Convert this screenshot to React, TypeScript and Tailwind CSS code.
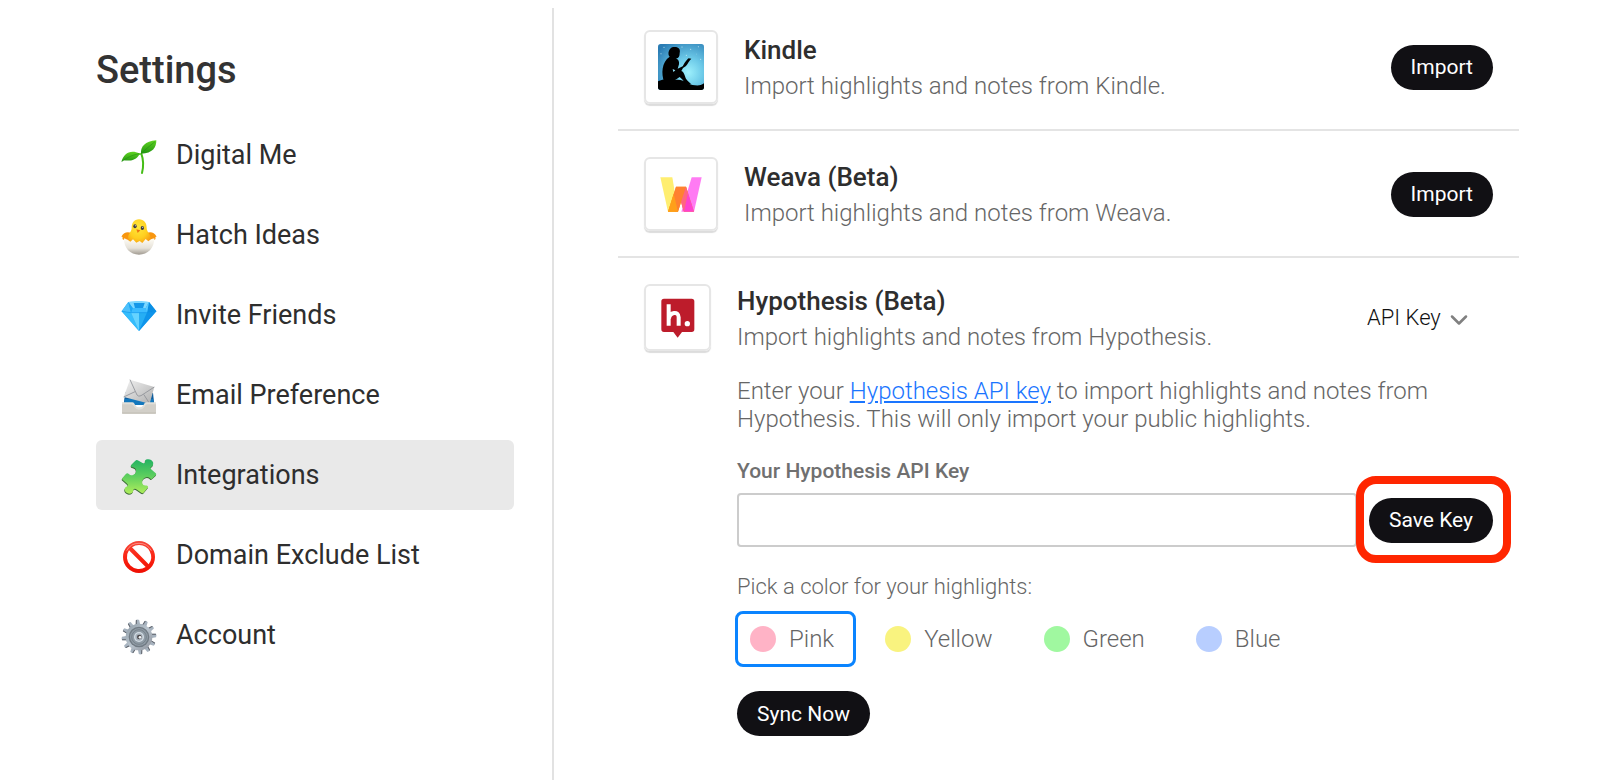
import React, { useState } from 'react';
import { ChevronDown } from 'lucide-react';

// Sidebar icons, all drawn on the same 108 grid
const SeedlingIcon = () => (
  <svg className="w-9 h-9" viewBox="0 0 108 108">
    <defs>
      <linearGradient id="leaf" x1="0" y1="0" x2="0" y2="1">
        <stop offset="0" stopColor="#5fd321" />
        <stop offset="1" stopColor="#219410" />
      </linearGradient>
    </defs>
    <path d="M61 44C66 58 69 78 63 102" fill="none" stroke="#45bd16" strokeWidth="6" strokeLinecap="round" />
    <path d="M59 46C52 42 46 46 40 44" fill="none" stroke="#45bd16" strokeWidth="4" />
    <path d="M60 44C58 24 72 6 106 4C106 24 96 44 60 44Z" fill="url(#leaf)" />
    <path d="M1 69C8 44 28 30 56 44C46 66 24 66 8 64Z" fill="url(#leaf)" />
    <path d="M62 42C74 30 88 20 102 8M4 67C16 56 34 48 54 44" fill="none" stroke="#1b8a10" strokeWidth="1.5" />
  </svg>
);

const ChickIcon = () => (
  <svg className="w-9 h-9" viewBox="0 0 108 108">
    <defs>
      <radialGradient id="chick" cx="0.45" cy="0.3" r="0.7">
        <stop offset="0" stopColor="#ffe83d" />
        <stop offset="0.6" stopColor="#ffce1f" />
        <stop offset="1" stopColor="#f79a10" />
      </radialGradient>
      <linearGradient id="shell" x1="0" y1="0" x2="0" y2="1">
        <stop offset="0" stopColor="#fffdf6" />
        <stop offset="0.6" stopColor="#e6e2d9" />
        <stop offset="1" stopColor="#a09a91" />
      </linearGradient>
    </defs>
    <path d="M32 42C20 38 8 39 2 52Q1 55 5 53Q3 62 8 62L13 59L18 68H90L95 59L100 62Q105 62 103 53Q107 55 106 52C100 39 88 38 76 42Z" fill="#f8960f" />
    <path d="M54 1C39 1 32 13 32 27C32 37 24 42 21 54L26 80H86L89 54C86 42 77 38 77 26C77 12 69 1 54 1Z" fill="url(#chick)" />
    <path d="M9 58L20 62L28 68L36 61L46 71L56 66L64 72L74 60L82 67L90 61L100 58C100 88 80 107 54 107S8 88 9 58Z" fill="url(#shell)" />
    <ellipse cx="42" cy="22" rx="5" ry="6" fill="#3b3a44" />
    <ellipse cx="64" cy="27" rx="5" ry="6" fill="#3b3a44" />
    <circle cx="43" cy="20" r="1.6" fill="#fff" />
    <circle cx="65" cy="25" r="1.6" fill="#fff" />
    <path d="M46 31L58 34L50 42Z" fill="#ee7410" />
  </svg>
);

const DiamondIcon = () => (
  <svg className="w-9 h-9" viewBox="0 0 108 108">
    <path d="M2 37L22 9H84L106 37L54 96Z" fill="#19a5f5" />
    <path d="M22 9L30 41L2 37Z" fill="#4cc0fb" />
    <path d="M84 9L78 41L106 37Z" fill="#0b8fe4" />
    <path d="M22 9C40 5 66 5 84 9L74 27H35Z" fill="#7ed8ff" />
    <path d="M38 12H71L66 28H42Z" fill="#1598e9" />
    <path d="M35 27H74L78 41H30Z" fill="#3cbcff" />
    <path d="M22 9L35 27L30 41Z" fill="#1fa9f5" />
    <path d="M84 9L74 27L78 41Z" fill="#5ccbff" />
    <path d="M2 37L30 41L54 96Z" fill="#35bdfc" />
    <path d="M30 41H54V96Z" fill="#65d3ff" />
    <path d="M54 41H78L54 96Z" fill="#26aef4" />
    <path d="M78 41L106 37L54 96Z" fill="#0f94ea" />
    <path d="M2 37L30 41H78L106 37" fill="none" stroke="#0a8fe6" strokeWidth="1.5" />
  </svg>
);

const InboxIcon = () => (
  <svg className="w-9 h-9" viewBox="0 0 108 108">
    <defs>
      <linearGradient id="paper" x1="0" y1="0" x2="1" y2="1">
        <stop offset="0" stopColor="#f3f3f3" />
        <stop offset="1" stopColor="#aeaeae" />
      </linearGradient>
    </defs>
    <path d="M10 60L14 40L96 42L100 78H8Z" fill="#0e5d9d" />
    <path d="M12 60H96L100 78H8Z" fill="#1478bd" />
    <path d="M27 2L100 24L86 74L8 54Z" fill="url(#paper)" />
    <path d="M27 2L48 48Q53 54 60 50L100 24M8 54L42 38M86 74L68 46" fill="none" stroke="#8e9096" strokeWidth="2.5" />
    <path d="M3 70H34Q39 70 42 77Q46 85 54 85Q64 85 68 77Q71 70 76 70H105V101Q105 104 102 104H6Q3 104 3 101Z" fill="#e1dfd9" />
    <path d="M3 76H32Q37 78 40 84Q45 92 54 92Q65 92 70 84Q73 76 78 76H105V101Q105 104 102 104H6Q3 104 3 101Z" fill="#d2cfc8" />
    <path d="M3 102H105" stroke="#b5b2ab" strokeWidth="2" />
  </svg>
);

const PuzzleIcon = () => {
  const shape =
    'M43 5Q46 2 50 4L65 12Q71 15 73 10Q70 2 80 1Q92 0 97 10Q99 20 92 24Q86 28 92 32L106 44Q108 47 105 50L94 60Q90 63 87 58Q80 52 72 57Q62 63 64 74Q66 82 75 81Q82 80 82 86L68 103Q65 106 61 103L48 94Q40 88 37 94Q36 106 24 106Q13 105 10 95Q9 87 17 84Q24 81 17 75L3 63Q0 60 4 57L14 46Q18 41 23 46Q29 52 37 48Q46 44 45 34Q44 26 36 25Q28 25 30 18Z';
  return (
    <svg className="w-9 h-9" viewBox="0 0 108 110">
      <defs>
        <linearGradient id="puzzle" x1="0" y1="0" x2="0" y2="1">
          <stop offset="0" stopColor="#22b262" />
          <stop offset="0.5" stopColor="#5fcf5e" />
          <stop offset="1" stopColor="#b0ee5c" />
        </linearGradient>
      </defs>
      <path d={shape} fill="#3c6b37" transform="translate(-1 3)" />
      <path d={shape} fill="url(#puzzle)" />
    </svg>
  );
};

const ProhibitedIcon = () => (
  <svg className="w-9 h-9" viewBox="0 0 108 108">
    <defs>
      <linearGradient id="stop" x1="0" y1="0" x2="0" y2="1">
        <stop offset="0" stopColor="#f5473a" />
        <stop offset="0.5" stopColor="#fb2412" />
        <stop offset="1" stopColor="#ee0e02" />
      </linearGradient>
    </defs>
    <path
      d="M54 6A48 48 0 1 0 54 102A48 48 0 1 0 54 6ZM54 18A36 36 0 0 1 83 76L33 25A36 36 0 0 1 54 18ZM24 34L74 84A36 36 0 0 1 24 34Z"
      fill="url(#stop)"
      fillRule="evenodd"
    />
    <path d="M17 35A42 42 0 0 1 91 35" fill="none" stroke="#ffb0a8" strokeWidth="2" />
  </svg>
);

const GearIcon = () => (
  <svg className="w-9 h-9" viewBox="0 0 108 108">
    <defs>
      <linearGradient id="gear" x1="0" y1="0" x2="1" y2="1">
        <stop offset="0" stopColor="#8e9ba6" />
        <stop offset="0.5" stopColor="#b9c4ce" />
        <stop offset="1" stopColor="#8b8f98" />
      </linearGradient>
    </defs>
    {Array.from({ length: 12 }, (_, i) => (
      <g key={i} transform={`rotate(${i * 30 - 5} 54 54)`}>
        <path d="M47 20L49 3Q54 0 59 3L61 20Z" fill="#a7b3bf" />
        <path d="M47 20L49 3L52 2L50 20Z" fill="#5c6068" />
      </g>
    ))}
    <circle cx="54" cy="54" r="40" fill="url(#gear)" />
    <circle cx="54" cy="54" r="31" fill="#717b84" />
    <circle cx="54" cy="54" r="27" fill="#8f9ba5" />
    <circle cx="54" cy="54" r="22" fill="none" stroke="#77828b" strokeWidth="3" />
    <circle cx="54" cy="54" r="15" fill="#d3dce4" />
    <circle cx="54" cy="54" r="11" fill="#a6b1bb" />
    <circle cx="55" cy="54" r="7" fill="#4d4a4c" />
    <circle cx="57" cy="55" r="4" fill="#f4f6f8" />
  </svg>
);

// Integration logos
const KindleLogo = () => (
  <svg className="w-[46px] h-[46px]" viewBox="0 0 138 138">
    <defs>
      <radialGradient id="sky" cx="0.66" cy="0.62" r="0.8">
        <stop offset="0" stopColor="#9df0fc" />
        <stop offset="0.4" stopColor="#6cc9e8" />
        <stop offset="1" stopColor="#2a7cb4" />
      </radialGradient>
      <clipPath id="tile">
        <rect width="138" height="138" rx="8" />
      </clipPath>
    </defs>
    <g clipPath="url(#tile)">
      <rect width="138" height="138" fill="url(#sky)" />
      <g fill="#d8f5fc">
        <circle cx="9" cy="29" r="1.5" />
        <circle cx="18" cy="10" r="1.5" />
        <circle cx="72" cy="9" r="1.5" />
        <circle cx="85" cy="34" r="1.5" />
        <circle cx="98" cy="16" r="1.5" />
        <circle cx="121" cy="8" r="1.5" />
        <circle cx="128" cy="46" r="1.5" />
        <circle cx="116" cy="30" r="1" />
      </g>
      <path d="M0 112C16 104 34 107 50 108C66 105 78 110 90 119C104 122 122 130 138 118V138H0Z" />
      <path d="M35 38C27 31 33 8 48 9C62 8 68 16 65 27C65 37 62 44 54 43C60 46 65 52 63 61L59 74L74 67L80 56C86 50 89 43 92 43L100 44C95 48 88 61 84 66L75 72L70 81C80 84 81 101 85 106C91 114 97 117 99 120L84 122C77 111 72 104 65 99L47 111L18 113C10 89 10 55 35 38Z" />
      <path d="M44 75L52 79L46 84Z" fill="#8edcf0" />
    </g>
  </svg>
);

const WeavaLogo = () => (
  <svg className="w-[42px] h-[35px]" viewBox="0 0 126 105">
    <path d="M1 1H37L54 104H24Z" fill="#ffee70" />
    <path d="M95 1H125L102 104H64Z" fill="#ff7bf3" />
    <path d="M48 29H78L102 104H72L63 76L54 104H24Z" fill="#ff9a24" />
    <path d="M48 29H78L84 50L63 76L54 104H44L38 62Z" fill="#ff8130" />
    <path d="M36 68L44 104H24Z" fill="#ffb01f" />
    <path d="M41 50L54 104H24Z" fill="#ff9f1a" />
    <path d="M83 44L102 104H72L66 84Z" fill="#ff41cf" />
    <path d="M78 29L84 47L72 104L63 76Z" fill="#ff6680" />
  </svg>
);

const HypothesisLogo = () => (
  <svg className="w-[34px] h-10" viewBox="0 0 102 120">
    <path d="M9 2H92Q100 2 100 10V94Q100 102 92 102H63L50 119L37 102H9Q1 102 1 94V10Q1 2 9 2Z" fill="#bd1c2b" />
    <path d="M23 19V83M24 62C26 42 53 38 53 58V83" fill="none" stroke="#fff" strokeWidth="12" />
    <circle cx="79" cy="77" r="8" fill="#fff" />
  </svg>
);

const navItems = [
  { label: 'Digital Me', Icon: SeedlingIcon },
  { label: 'Hatch Ideas', Icon: ChickIcon },
  { label: 'Invite Friends', Icon: DiamondIcon },
  { label: 'Email Preference', Icon: InboxIcon },
  { label: 'Integrations', Icon: PuzzleIcon },
  { label: 'Domain Exclude List', Icon: ProhibitedIcon },
  { label: 'Account', Icon: GearIcon },
];

const importers = [
  { name: 'Kindle', text: 'Import highlights and notes from Kindle.', Logo: KindleLogo },
  { name: 'Weava (Beta)', text: 'Import highlights and notes from Weava.', Logo: WeavaLogo },
];

const colors = [
  { name: 'Pink', dot: 'bg-[#ffb3c6]' },
  { name: 'Yellow', dot: 'bg-[#f9f37f]' },
  { name: 'Green', dot: 'bg-[#a0f8a0]' },
  { name: 'Blue', dot: 'bg-[#b8ceff]' },
];

const PillButton = ({ children }: { children: React.ReactNode }) => (
  <button type="button" className="h-[45px] px-5 rounded-full bg-[#111014] text-white text-[21px] leading-7 whitespace-nowrap">
    {children}
  </button>
);

const Heading = ({ name, text }: { name: string; text: string }) => (
  <div className="flex-1 min-w-0 flex flex-col gap-1.5">
    <h2 className="text-[26px] leading-8 font-medium text-[#2e2e2e]">{name}</h2>
    <p className="text-2xl leading-7 font-light text-[#666]">{text}</p>
  </div>
);

const App: React.FC = () => {
  const [active, setActive] = useState('Integrations');
  const [apiKey, setApiKey] = useState('');
  const [color, setColor] = useState('Pink');

  return (
    <div className="min-h-screen bg-white flex font-['Roboto',sans-serif]">
      {/* Sidebar */}
      <aside className="w-[554px] shrink-0 mt-2 pt-9 pl-24 pr-[38px] border-r-2 border-[#e2e2e2]">
        <h1 className="text-[38px] leading-[52px] font-medium text-[#333]">Settings</h1>
        <nav className="mt-6 flex flex-col gap-2.5">
          {navItems.map(({ label, Icon }) => (
            <button
              key={label}
              type="button"
              onClick={() => setActive(label)}
              className={`h-[70px] pl-[25px] flex items-center gap-[19px] rounded-md text-left ${active === label ? 'bg-[#e9e9e9]' : ''}`}
            >
              <span className="pt-1 shrink-0"><Icon /></span>
              <span className="text-[27px] leading-8 text-[#2e2e2e]">{label}</span>
            </button>
          ))}
        </nav>
      </aside>

      {/* Integrations */}
      <main className="flex-1 min-w-0 pt-1 pl-16 pr-[81px]">
        {importers.map(({ name, text, Logo }) => (
          <section key={name} className="flex items-center gap-[26px] px-[26px] pt-[26px] pb-[25px] border-b-2 border-[#e4e4e4]">
            <div className="w-[74px] h-[74px] shrink-0 flex items-center justify-center rounded-md border-2 border-[#e6e6e6] shadow-[0_2px_1px_#dcdcdc]">
              <Logo />
            </div>
            <Heading name={name} text={text} />
            <PillButton>Import</PillButton>
          </section>
        ))}

        <section className="flex items-start gap-[26px] px-[26px] pt-[26px] pb-11">
          <div className="w-[67px] h-[67px] shrink-0 flex items-center justify-center rounded-md border-2 border-[#e6e6e6] shadow-[0_2px_1px_#dcdcdc]">
            <HypothesisLogo />
          </div>

          <div className="flex-1 min-w-0 pt-px">
            <div className="flex items-center">
              <Heading name="Hypothesis (Beta)" text="Import highlights and notes from Hypothesis." />
              <div className="relative mr-5">
                <select aria-label="Connection method" className="appearance-none bg-transparent pr-8 text-[22px] leading-7 font-light text-[#111]">
                  <option>API Key</option>
                </select>
                <ChevronDown className="absolute right-0 top-0.5 w-7 h-7 text-[#808080] pointer-events-none" strokeWidth={2.2} />
              </div>
            </div>

            <p className="mt-[26px] text-2xl leading-7 font-light text-[#666]">
              Enter your <a href="#" className="text-[#1a75ff] underline">Hypothesis API key</a> to import highlights and notes from Hypothesis. This will only import your public highlights.
            </p>

            <label htmlFor="api-key" className="block mt-[26px] text-[21px] leading-6 font-medium text-[#707070]">
              Your Hypothesis API Key
            </label>
            <div className="mt-2.5 flex items-center gap-3">
              <input
                id="api-key"
                type="text"
                value={apiKey}
                onChange={(e) => setApiKey(e.target.value)}
                className="flex-1 min-w-0 h-[54px] px-4 text-[22px] border-2 border-[#ccc] rounded outline-none"
              />
              <div className="relative">
                <PillButton>Save Key</PillButton>
                {/* Callout ring around the save button */}
                <div className="absolute -left-[13px] -right-[18px] -top-[22px] -bottom-[20px] border-8 border-[#ff2600] rounded-[20px] pointer-events-none"></div>
              </div>
            </div>

            <fieldset className="mt-[26px]">
              <legend className="text-[22px] leading-7 font-light text-[#666]">Pick a color for your highlights:</legend>
              <div className="mt-2.5 -ml-0.5 flex gap-3.5">
                {colors.map(({ name, dot }) => (
                  <label
                    key={name}
                    className={`h-14 px-3 flex items-center gap-[13px] border-[3px] rounded-lg cursor-pointer ${color === name ? 'border-[#0a84ff]' : 'border-transparent'}`}
                  >
                    <input type="radio" name="color" className="sr-only" checked={color === name} onChange={() => setColor(name)} />
                    <span className={`w-[26px] h-[26px] rounded-full ${dot}`}></span>
                    <span className="pr-[7px] text-2xl leading-7 font-light text-[#666]">{name}</span>
                  </label>
                ))}
              </div>
            </fieldset>

            <div className="mt-6">
              <PillButton>Sync Now</PillButton>
            </div>
          </div>
        </section>
      </main>
    </div>
  );
};

export default App;
